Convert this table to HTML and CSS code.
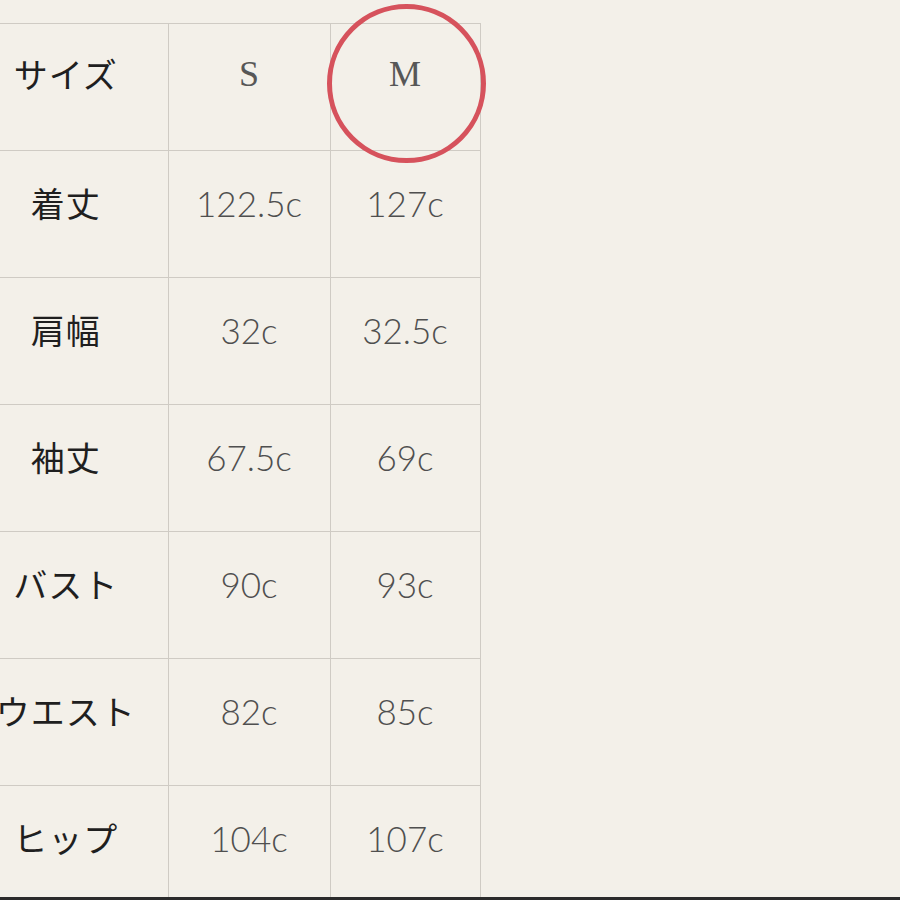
FILE: index.html
```html
<!DOCTYPE html>
<html lang="ja">
<head>
<meta charset="utf-8">
<link rel="stylesheet" href="styles.css">
</head>
<body>
<div class="page">
  <table class="size-table">
    <colgroup>
      <col class="c1"><col class="c2"><col class="c3">
    </colgroup>
    <tr class="head"><th>サイズ</th><td class="sz">S</td><td class="sz">M</td></tr>
    <tr><th>着丈</th><td>122.5c</td><td>127c</td></tr>
    <tr><th>肩幅</th><td>32c</td><td>32.5c</td></tr>
    <tr><th>袖丈</th><td>67.5c</td><td>69c</td></tr>
    <tr><th>バスト</th><td>90c</td><td>93c</td></tr>
    <tr><th>ウエスト</th><td>82c</td><td>85c</td></tr>
    <tr><th>ヒップ</th><td>104c</td><td>107c</td></tr>
  </table>
  <div class="circle"></div>
  <div class="bottom-bar"></div>
</div>
</body>
</html>
```
FILE: styles.css
```css
html, body {
  margin: 0;
  padding: 0;
  background: #f3f0e9;
}
.page {
  position: relative;
  width: 900px;
  height: 900px;
  overflow: hidden;
  background: #f3f0e9;
}
.size-table {
  border-collapse: collapse;
  margin-left: -36px;
  margin-top: 23px;
  table-layout: fixed;
  width: 516px;
}
.c1 { width: 204px; }
.c2 { width: 162px; }
.c3 { width: 150px; }
.size-table th,
.size-table td {
  border: 1px solid #cfcbc4;
  height: 104px;
  padding: 0 0 22px 0;
  text-align: center;
  vertical-align: middle;
  line-height: 1;
}
.size-table th {
  font-family: "Noto Sans CJK JP", sans-serif;
  font-weight: 400;
  font-size: 34px;
  color: #1f1f1f;
  border-left: none;
  white-space: nowrap;
  letter-spacing: 1px;
}
.size-table td {
  font-family: "Lato", "Open Sans", sans-serif;
  font-weight: 300;
  font-size: 35px;
  color: #4f4f4f;
}
.size-table td.sz {
  font-family: "Liberation Serif", serif;
  font-weight: 400;
  font-size: 36px;
  color: #575757;
  height: 100px;
  padding-bottom: 26px;
}
.size-table .head th {
  height: 100px;
  padding-bottom: 26px;
}
.circle {
  position: absolute;
  left: 327px;
  top: 4px;
  width: 149px;
  height: 149px;
  border: 5px solid #d6525c;
  border-radius: 50%;
}
.bottom-bar {
  position: absolute;
  left: 0;
  bottom: 0;
  width: 900px;
  height: 3px;
  background: #2b2b2b;
}
```
